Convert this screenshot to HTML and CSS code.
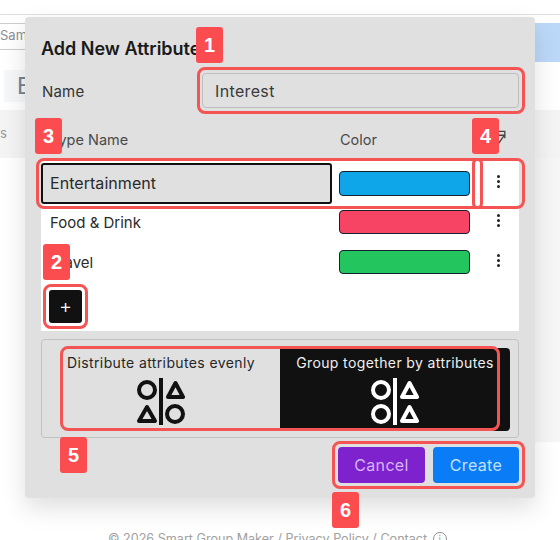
FILE: index.html
```html
<!DOCTYPE html>
<html lang="en">
<head>
<meta charset="utf-8">
<title>Add New Attribute</title>
<link rel="stylesheet" href="styles.css">
</head>
<body>
<div class="page">
  <div class="topbar"></div>
  <div class="toolbar">
    <div class="sample">Sam</div>
    <div class="go">&gt; M</div>
  </div>
  <div class="tabs"><span class="tab">E</span></div>
  <div class="band">s</div>
  <div class="panel"><div class="panel-edge"></div></div>
  <footer class="foot">© 2026 Smart Group Maker / Privacy Policy / Contact <span class="info">i</span></footer>
</div>

<section class="dialog">
  <h2 class="title">Add New Attribute</h2>
  <div class="name-row">
    <label class="name-label">Name</label>
    <div class="name-input">Interest</div>
  </div>
  <div class="head-row">
    <span class="head-type">Type Name</span>
    <span class="head-color">Color</span>
    <svg class="head-icon" viewBox="0 0 16 16"><path d="M4 1.5h9.5v8M7 14.5 3 6h10z" fill="none" stroke="#444" stroke-width="1.5"/></svg>
  </div>
  <div class="table">
    <div class="row row-first">
      <div class="type-input">Entertainment</div>
      <div class="swatch sw-blue"></div>
      <div class="kebab"><i></i><i></i><i></i></div>
    </div>
    <div class="row row-food">
      <div class="type-text">Food &amp; Drink</div>
      <div class="swatch sw-red"></div>
      <div class="kebab"><i></i><i></i><i></i></div>
    </div>
    <div class="row row-travel">
      <div class="type-text">Travel</div>
      <div class="swatch sw-green"></div>
      <div class="kebab"><i></i><i></i><i></i></div>
    </div>
    <button class="add">+</button>
  </div>
  <div class="mode">
    <div class="seg seg-left">
      <span class="seg-label">Distribute attributes evenly</span>
      <svg class="seg-icon" viewBox="0 0 48 48" fill="none" stroke="#111" stroke-width="4" stroke-linejoin="round">
        <circle cx="10" cy="12" r="8"/>
        <path d="M24 0v47"/>
        <path d="M38.5 5 46 19H31z"/>
        <path d="M10 29 18 43H2z"/>
        <circle cx="38" cy="36" r="8"/>
      </svg>
    </div>
    <div class="seg seg-right">
      <span class="seg-label">Group together by attributes</span>
      <svg class="seg-icon" viewBox="0 0 48 48" fill="none" stroke="#fff" stroke-width="4" stroke-linejoin="round">
        <circle cx="10" cy="12" r="8"/>
        <path d="M24 0v47"/>
        <path d="M38.5 5 46 19H31z"/>
        <circle cx="10" cy="36" r="8"/>
        <path d="M38.5 29 46 43H31z"/>
      </svg>
    </div>
  </div>
  <div class="actions">
    <button class="btn btn-cancel">Cancel</button>
    <button class="btn btn-create">Create</button>
  </div>
</section>

<div class="ring ring-name"></div>
<div class="ring ring-row"></div>
<div class="ring ring-col"></div>
<div class="ring ring-add"></div>
<div class="ring ring-seg"></div>
<div class="ring ring-btn"></div>
<div class="badge b1">1</div>
<div class="badge b2">2</div>
<div class="badge b3">3</div>
<div class="badge b4">4</div>
<div class="badge b5">5</div>
<div class="badge b6">6</div>
</body>
</html>
```
FILE: styles.css
```css
* { box-sizing: border-box; }
html, body { margin: 0; }
body {
  position: relative;
  width: 560px;
  height: 540px;
  overflow: hidden;
  background: #fff;
  font-family: Inter, "Liberation Sans", sans-serif;
  color: #222;
}
.page { height: 540px; display: flex; flex-direction: column; }
.topbar { height: 15px; flex: none; border-bottom: 1px solid #dfdfdf; }
.toolbar { height: 48px; flex: none; display: flex; justify-content: space-between; align-items: flex-start; padding-top: 8px; }
.sample { width: 40px; height: 27px; border-top: 1px solid #ccc; border-bottom: 1px solid #ccc; padding-top: 3px; font-size: 13px; color: #8a8f95; }
.go { width: 60px; height: 39px; background: #bcd8f8; color: #e9f3ff; font-size: 15px; padding: 9px 0 0 0; }
.tabs { height: 47px; flex: none; padding: 7px 0 0 4px; }
.tab { display: block; width: 60px; height: 32px; background: #f6f7f8; padding-left: 13px; font-size: 23px; line-height: 32px; color: #75818f; }
.band { height: 48px; flex: none; background: #f4f4f4; font-size: 13px; line-height: 46px; color: #999; }
.panel { height: 284px; flex: none; display: flex; justify-content: flex-end; }
.panel-edge { width: 25px; background: #f6f6f6; }
.foot { margin-top: auto; padding-left: 108px; height: 9px; font-size: 12.6px; line-height: 16px; color: #a0a0a0; white-space: nowrap; }
.info { display: inline-block; width: 14px; height: 14px; margin-left: 2px; border: 1px solid #909090; border-radius: 50%; text-align: center; font-size: 10px; line-height: 12px; }

.dialog {
  position: absolute;
  left: 25px;
  top: 17px;
  width: 510px;
  height: 481px;
  padding: 0 16px;
  display: flex;
  flex-direction: column;
  background: #e0e0e0;
  border-radius: 4px;
  box-shadow: 0 10px 24px rgba(0, 0, 0, .13);
}
.title { margin: 20px 0 0; height: 24px; font-size: 18px; line-height: 24px; font-weight: 600; color: #1a1a1a; white-space: nowrap; }
.name-row { display: flex; align-items: center; justify-content: space-between; margin-top: 12px; height: 35px; }
.name-label { padding: 1px 0 0 1px; font-size: 15px; letter-spacing: .2px; color: #333; }
.name-input { width: 317px; height: 35px; padding: 0 12px; border: 1px solid #bdbdbd; border-radius: 4px; font-size: 16px; letter-spacing: .35px; line-height: 35px; color: #3a3a3a; }
.head-row { display: flex; align-items: center; height: 52px; padding-top: 10px; font-size: 14.5px; color: #4a4a4a; }
.head-type { width: 299px; padding-left: 9px; }
.head-color { flex: 1; }
.head-icon { width: 14px; height: 14px; margin: 0 12px 4px 0; }

.table { height: 171px; background: #fff; display: flex; flex-direction: column; }
.row { display: flex; align-items: center; flex: none; }
.row-first { height: 47px; }
.row-food { height: 30px; }
.row-travel { height: 50px; }
.type-input { width: 291px; height: 41px; border: 2px solid #111; border-radius: 3px; background: #e0e0e0; padding-left: 7px; font-size: 16px; letter-spacing: .05px; line-height: 37px; color: #2a2a2a; }
.type-text { width: 291px; padding-left: 9px; font-size: 15px; color: #2a2a2a; }
.swatch { width: 131px; height: 24px; margin-left: 7px; border: 1px solid #14202c; border-radius: 4px; }
.sw-blue { background: #0ea5e9; height: 25px; }
.sw-red { background: #f84464; }
.sw-green { background: #22c55e; }
.kebab { width: 4px; margin: 0 0 4px 27px; display: flex; flex-direction: column; gap: 2px; }
.kebab i { display: block; width: 3px; height: 3px; border-radius: 50%; background: #222; }
.add { width: 33px; height: 33px; margin: 3px 0 0 8px; padding: 0; border: 0; border-radius: 3px; background: #111; color: #fff; font: 300 20px/33px Inter, sans-serif; }

.mode { height: 99px; margin-top: 8px; padding: 8px 8px 6px 0; border: 1px solid #c2c2c2; border-radius: 4px; display: grid; grid-template-columns: 238px 230px; }
.seg { display: flex; flex-direction: column; align-items: center; }
.seg-right { background: #111; border-radius: 0 4px 4px 0; color: #f0f0f0; }
.seg-left { color: #262626; }
.seg-label { font-size: 14px; letter-spacing: .38px; line-height: 20px; margin-top: 5px; white-space: nowrap; }
.seg-icon { width: 48px; height: 48px; margin-top: 5px; }

.actions { display: flex; justify-content: flex-end; gap: 8px; margin-top: 9px; }
.btn { width: 87px; height: 36px; padding: 0; border: 0; border-radius: 4px; font: 400 16px/36px Inter, sans-serif; letter-spacing: .35px; }
.btn-cancel { background: #7e22ce; color: #d8b4fe; }
.btn-create { background: #0a7cf5; color: #c4e0ff; width: 86px; }

.ring { position: absolute; border: 3px solid #f45454; border-radius: 8px; }
.ring-name { left: 197px; top: 67px; width: 328px; height: 47px; }
.ring-row { left: 36px; top: 158px; width: 489px; height: 51px; }
.ring-col { left: 472px; top: 158px; width: 11px; height: 51px; border-radius: 6px; }
.ring-add { left: 43px; top: 284px; width: 45px; height: 45px; }
.ring-seg { left: 60px; top: 346px; width: 440px; height: 85px; }
.ring-btn { left: 332px; top: 441px; width: 193px; height: 48px; }
.badge { position: absolute; width: 27px; height: 36px; border-radius: 3px; background: #fb4d50; color: #fff; font: 700 20px/36px "Liberation Sans", sans-serif; text-align: center; }
.b1 { left: 196px; top: 27px; }
.b2 { left: 43px; top: 244px; }
.b3 { left: 35px; top: 118px; }
.b4 { left: 472px; top: 118px; }
.b5 { left: 60px; top: 437px; }
.b6 { left: 332px; top: 492px; }
```
